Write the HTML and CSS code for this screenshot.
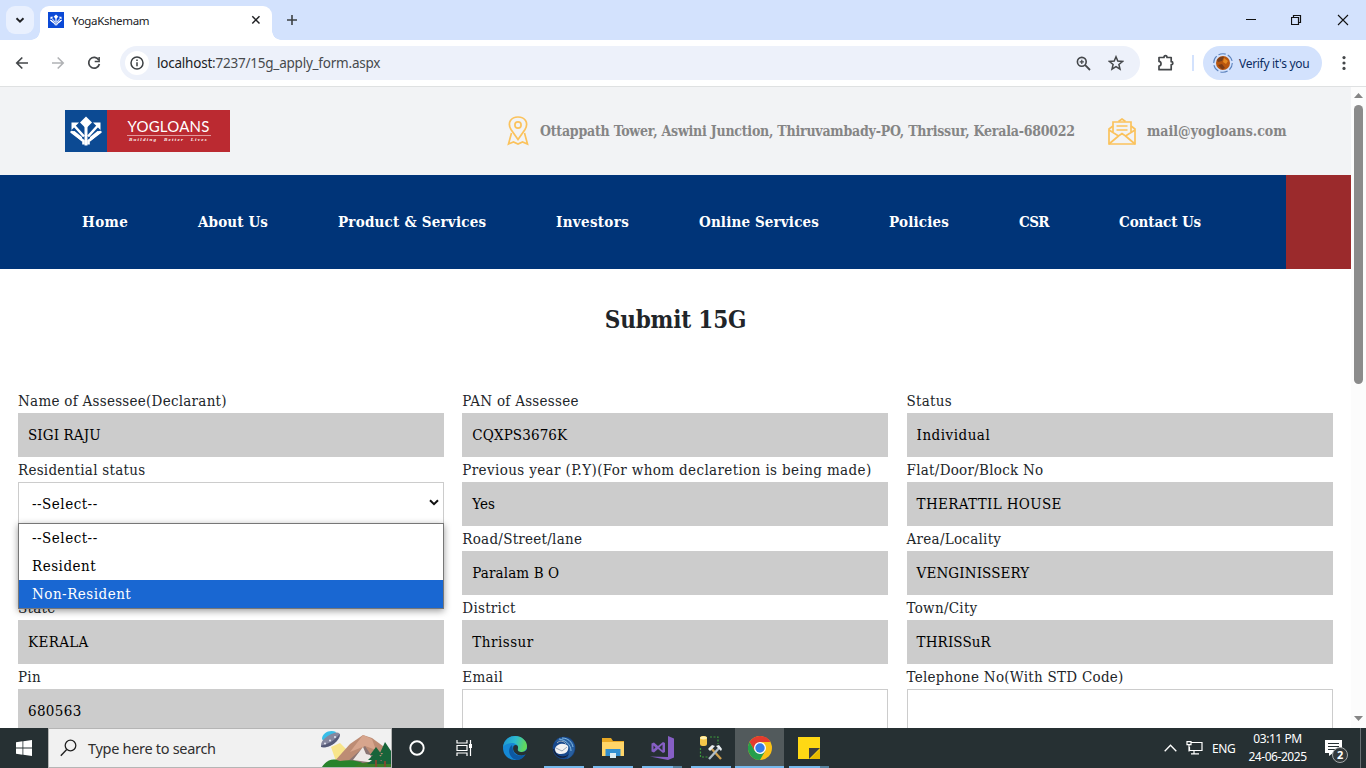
FILE: index.html
```html
<!DOCTYPE html>
<html lang="en">
<head>
<meta charset="utf-8">
<title>YogaKshemam</title>
<link rel="stylesheet" href="styles.css">
</head>
<body>
<div class="tabstrip">
  <div class="tab-menu"><svg width="28" height="28" viewBox="0 0 28 28"><path d="M10.5 12.3l3.5 3.4 3.5-3.4" fill="none" stroke="#202124" stroke-width="1.9"/></svg></div>
  <div class="tab">
    <svg class="favicon" width="16" height="16" viewBox="0 0 42 42"><rect width="42" height="42" fill="#0b49d6"/><use href="#tree"/></svg>
    <span class="tab-title">YogaKshemam</span>
    <svg width="10" height="10" viewBox="0 0 10 10"><path d="M1.3 1.3l7.2 7.2M8.5 1.3L1.3 8.5" stroke="#202124" stroke-width="1.5"/></svg>
  </div>
  <svg class="new-tab" width="12" height="12" viewBox="0 0 12 12"><path d="M6 1v10M1 6h10" stroke="#3c4043" stroke-width="1.6"/></svg>
  <div class="win-controls">
    <svg width="10" height="12" viewBox="0 0 10 12"><path d="M0 5.5h10" stroke="#111" /></svg>
    <svg width="11" height="12" viewBox="0 0 11 12"><path d="M.5 3.5h7v7h-7zM2.5 3.5v-2h7v7h-2" fill="none" stroke="#111" stroke-width="1.2"/></svg>
    <svg width="12" height="12" viewBox="0 0 12 12"><path d="M1 1l10 10M11 1L1 11" stroke="#111" stroke-width="1.1"/></svg>
  </div>
</div>
<div class="toolbar">
  <svg class="tb-back" width="14" height="14" viewBox="0 0 14 14"><path d="M13 7H2M7.3 1.5L1.8 7l5.5 5.5" fill="none" stroke="#44474a" stroke-width="1.7"/></svg>
  <svg class="tb-fwd" width="14" height="14" viewBox="0 0 14 14"><path d="M1 7h11M6.7 1.5L12.2 7l-5.5 5.5" fill="none" stroke="#b0b2b5" stroke-width="1.6"/></svg>
  <svg class="tb-reload" width="14" height="14" viewBox="0 0 14 14"><path d="M11.8 4A5.4 5.4 0 1 0 12.4 8" fill="none" stroke="#44474a" stroke-width="1.7"/><path d="M12.9 1v5.2H7.7V4.8h3.7V1z" fill="#44474a"/></svg>
  <div class="omnibox">
    <div class="site-info"><svg width="14" height="14" viewBox="0 0 14 14"><circle cx="7" cy="7" r="6" fill="none" stroke="#3c4043" stroke-width="1.5"/><path d="M7 6.2v4M7 3.5v1.5" stroke="#3c4043" stroke-width="1.5"/></svg></div>
    <span class="url"><b>localhost</b>:7237/15g_apply_form.aspx</span>
    <svg class="zoom" width="15" height="15" viewBox="0 0 15 15"><circle cx="5.8" cy="5.8" r="4.4" fill="none" stroke="#44474a" stroke-width="1.6"/><path d="M9.2 9.2l4.8 4.8" stroke="#44474a" stroke-width="1.8"/><path d="M5.8 3.7v4.2M3.7 5.8h4.2" stroke="#44474a" stroke-width="1.2"/></svg>
    <svg width="16" height="16" viewBox="0 0 16 16"><path d="M8 1.8l1.8 4.3 4.7.4-3.6 3 1.1 4.6L8 11.6l-4 2.5 1.1-4.6-3.6-3 4.7-.4z" fill="none" stroke="#44474a" stroke-width="1.5"/></svg>
  </div>
  <svg class="puzzle" width="18" height="18" viewBox="0 0 18 18"><path d="M2 3.500h5c0-2.400 3-2.400 3 0h4.200v4.200c2.200 0 2.200 3 0 3v5H2v-3.700c2.700-.4 2.700-4.200 0-4.600z" fill="none" stroke="#44474a" stroke-width="1.700" stroke-linejoin="round"/></svg>
  <i class="tb-sep"></i>
  <div class="verify">
    <svg width="20" height="20" viewBox="0 0 20 20"><circle cx="10" cy="10" r="9.3" fill="none" stroke="#5c83bd" stroke-width="1.1" stroke-dasharray="7.5 2.2"/><circle cx="10" cy="10" r="7" fill="#b8560f"/><path d="M4 7c2-3 5-4 7-3l-2 4-4 1z" fill="#77401f"/><path d="M11 5l4 3-2 3-3-2z" fill="#e68a22"/><path d="M5 12l4-1 3 4-3 1.500z" fill="#7d3b14"/></svg>
    <span>Verify it's you</span>
  </div>
  <svg class="dots" width="4" height="16" viewBox="0 0 4 16"><g fill="#44474a"><circle cx="2" cy="2.6" r="1.6"/><circle cx="2" cy="8" r="1.6"/><circle cx="2" cy="13.4" r="1.6"/></g></svg>
</div>
<div class="viewport">
  <div class="page">
    <header class="site-header">
      <div class="logo">
        <svg class="logo-mark" width="42" height="42" viewBox="0 0 42 42">
          <defs><g id="tree"><path d="M21 6.500l6 6-6 6-6-6z" fill="#fff"/><path d="M21 16v19.500" stroke="#fff" stroke-width="3"/><path d="M19 26.500L9.500 16M23 26.500L32.500 16M18.500 34.500v-3.500L6 21.500M23.500 34.500v-3.500L36 21.500" fill="none" stroke="#fff" stroke-width="2.600"/><path d="M6.500 12.500h7.500L6.500 20zM35.500 12.500H28l7.500 7.500z" fill="#fff"/><path d="M5 21.500l4.500-.5 7.500 6v4.500zM37 21.500l-4.500-.5-7.500 6v4.500z" fill="#fff"/></g></defs>
          <use href="#tree"/>
        </svg>
        <div class="logo-text"><span class="logo-name">YOGLOANS</span><span class="logo-tag">Building Better Lives</span></div>
      </div>
      <svg class="pin" width="22" height="30" viewBox="0 0 22 30"><g fill="none" stroke="#fbc25c" stroke-width="1.7"><path d="M11 23.500L4 13.500C-.2 6 4.500 1 11 1s11.200 5 7 12.500z"/><circle cx="11" cy="9" r="3.100"/><path d="M4.500 17L1.500 28l5-2 4.500 2 4.500-2 5 2-3-11"/></g></svg>
      <span class="addr">Ottappath Tower, Aswini Junction, Thiruvambady-PO, Thrissur, Kerala-680022</span>
      <svg class="mail-icon" width="28" height="27" viewBox="0 0 28 27"><g fill="none" stroke="#fbc25c" stroke-width="1.700"><path d="M5 8L1 11v15h26V11l-4-3M10.500 3.500L14 1l3.500 2.500"/><path d="M5 15V4h18v11M1 12l9.500 6L14 15.500l3.500 2.500 9.500-6M1 26l9.500-8M27 26l-9.500-8M8.500 8h11M8.500 12h11"/></g></svg>
      <span class="mail">mail@yogloans.com</span>
    </header>
    <nav class="nav">
      <ul class="menu"><li class="n1">Home</li><li class="n2">About Us</li><li class="n3">Product &amp; Services</li><li class="n4">Investors</li><li class="n5">Online Services</li><li class="n6">Policies</li><li class="n7">CSR</li><li class="n8">Contact Us</li></ul>
      <div class="nav-end"></div>
    </nav>
    <h1 class="title">Submit 15G</h1>
    <form class="form">
      <div class="field"><label>Name of Assessee(Declarant)</label><div class="box">SIGI RAJU</div></div>
      <div class="field"><label>PAN of Assessee</label><div class="box">CQXPS3676K</div></div>
      <div class="field"><label>Status</label><div class="box mixed">Individual</div></div>
      <div class="field"><label>Residential status</label>
        <div class="box mixed select">--Select--<svg width="10" height="7" viewBox="0 0 10 7"><path d="M1 1.200l4 4 4-4" fill="none" stroke="#111" stroke-width="2"/></svg></div>
        <div class="options mixed"><div>--Select--</div><div>Resident</div><div class="active">Non-Resident</div></div>
      </div>
      <div class="field"><label class="long">Previous year (P.Y)(For whom declaretion is being made)</label><div class="box">Yes</div></div>
      <div class="field"><label>Flat/Door/Block No</label><div class="box wide">THERATTIL HOUSE</div></div>
      <div class="field"></div>
      <div class="field"><label>Road/Street/lane</label><div class="box">Paralam B O</div></div>
      <div class="field"><label>Area/Locality</label><div class="box">VENGINISSERY</div></div>
      <div class="field"><label>State</label><div class="box wide">KERALA</div></div>
      <div class="field"><label>District</label><div class="box mixed">Thrissur</div></div>
      <div class="field"><label>Town/City</label><div class="box">THRISSuR</div></div>
      <div class="field"><label>Pin</label><div class="box wide">680563</div></div>
      <div class="field"><label>Email</label><div class="box open"></div></div>
      <div class="field"><label>Telephone No(With STD Code)</label><div class="box open"></div></div>
    </form>
  </div>
  <div class="scrollbar">
    <svg width="9" height="5" viewBox="0 0 9 5"><path d="M0 5l4.500-5L9 5z" fill="#858585"/></svg>
    <div class="thumb"></div>
    <svg class="down" width="9" height="5" viewBox="0 0 9 5"><path d="M0 0l4.500 5L9 0z" fill="#858585"/></svg>
  </div>
</div>
<div class="taskbar">
  <div class="start"><svg width="16" height="16" viewBox="0 0 16 16"><path d="M0 2.200L6.500 1.300v6.200H0zM7.300 1.200L16 0v7.500H7.300zM0 8.400h6.500v6.300L0 13.800zM7.300 8.400H16V16l-8.700-1.200z" fill="#fff"/></svg></div>
  <div class="search">
    <svg class="lens" width="17" height="18" viewBox="0 0 17 18"><circle cx="10.500" cy="6.500" r="5.300" fill="none" stroke="#222" stroke-width="1.300"/><path d="M6.700 10.500L.8 16.700" stroke="#222" stroke-width="1.400"/></svg>
    <span>Type here to search</span>
    <svg class="scene" width="71" height="37" viewBox="0 0 71 37">
      <path d="M11 17l9-4 16 16-18 8z" fill="#f8e58b"/>
      <path d="M13 33l17-19 13-9 9 3 19 14v15H13z" fill="#bd8c74"/><path d="M43 5l9 4 4 11-11-4-15 6z" fill="#d7a58d"/><path d="M27 32l18-16 6 9 6-5 8 15z" fill="#8b7472"/><path d="M33 30l10-13 3 7 4 1 5 8z" fill="#eee8e6"/>
      <path d="M2 37c5-8 12-9 18-6 12-2 22 0 28 6z" fill="#28832c"/><path d="M34 37c8-6 23-6 37-3v3z" fill="#3c7d26"/>
      <g fill="#17643a"><path d="M56 17l6 8h-3l5 5h-4l4 4H47l5-4h-4l5-5h-3zM65 12l6 9v13H59l4-5h-4l4-6h-3z"/></g><path d="M56 30v7M65 31v6" stroke="#7d4930" stroke-width="2"/>
      <path d="M2 9C2 3 10-1 16 2l-3 7-9 3z" fill="#39bde7"/><ellipse cx="10.500" cy="10" rx="11" ry="5" fill="#85879f" transform="rotate(-35 10.500 10)"/><path d="M1 15.500c7-1 14-5 19-12-1 9-11 15-19 13.500z" fill="#555a78"/><g fill="#e7e8f4"><circle cx="5" cy="13.500" r="1"/><circle cx="10" cy="10.500" r="1"/><circle cx="15" cy="7" r="1"/></g>
    </svg>
  </div>
  <div class="app"><svg width="16" height="16" viewBox="0 0 16 16"><circle cx="8" cy="8" r="6.700" fill="none" stroke="#fff" stroke-width="1.900"/></svg></div>
  <div class="app view"><svg width="17" height="16" viewBox="0 0 17 16"><path d="M1 0v3h10V0M1 16v-3h10v3M1 5.500h10v5H1zM14.500 0v16" fill="none" stroke="#fff" stroke-width="1.200"/><path d="M13 4h3v4h-3z" fill="#fff"/></svg></div>
  <div class="app edge"><svg width="24" height="24" viewBox="0 0 24 24"><defs><linearGradient id="eg" x2="1" y2=".2"><stop stop-color="#1d91d2"/><stop offset=".55" stop-color="#2dbbd0"/><stop offset="1" stop-color="#62d85b"/></linearGradient></defs><circle cx="12" cy="12" r="12" fill="#1588d5"/><path d="M0 11C1 4 6 0 12 0c7 0 12 5 12 10 0 4-3 6-6 6-4 0-4-1-3-3 1-4-3-6-6-6-4 0-8 2-9 4z" fill="url(#eg)"/><path d="M9 9c-6 5-2 14 5 15 4 0 7-3 9-6-5 3-12 2-13-4z" fill="#0c58a2"/><path d="M10.500 10c2-2 5-1 4.500 2-1 3 1 4 4 4 2 0 4-1 5-3 0 2 0 4-1 5-6 4-15-1-12.500-8z" fill="#263033"/></svg></div>
  <div class="app run"><svg width="24" height="24" viewBox="0 0 24 24"><circle cx="12" cy="12" r="11.300" fill="#17488c"/><path d="M3 6C8-1 19 1 22 8c2 7-2 13-7 15 4-8 2-14-5-18z" fill="#285f9f"/><path d="M10 2c6 0 10 4 11 9M7 3c7 1 12 6 12 12" fill="none" stroke="#83b9e3" stroke-width="1"/><path d="M3 13c1-5 9-7 13-3 1 5-2 8-7 8-4 0-6-2-6-5z" fill="#f3f3f4"/><path d="M4 12l6 3 5-4M5 7c3-3 7-2 9 1" fill="none" stroke="#9aa8b8"/><path d="M2 13c2 7 9 10 15 5-5 7-14 4-16-5z" fill="#141c34"/></svg></div>
  <div class="app run"><svg width="22" height="20" viewBox="0 0 22 20"><path d="M0 0h9l2 3h11v15H0z" fill="#e9a925"/><path d="M0 4h22v14H0z" fill="#ffd568"/><path d="M3.500 18v-7h15v7h-4.500v-3H8v3z" fill="#328fd0"/><path d="M8 15h6v5H8z" fill="#dcecf2"/></svg></div>
  <div class="app run multi"><svg width="24" height="24" viewBox="0 0 24 24"><path d="M18 0l6 2.500v19L18 24 0 20.500l18 .5z" fill="#865fc5"/><path d="M1.500 7.500L4 6.500l4 3.500 5-4 2 1v9l-2 1-5-4-4 3.500-2.500-1zM3.500 9.500v4l2-2zM12.500 8.500L9.300 11.500l3.200 3z" fill="#865fc5" fill-rule="evenodd"/></svg></div>
  <div class="app run"><svg width="24" height="24" viewBox="0 0 24 24"><rect x="1" y="0" width="7" height="10" rx="2.500" fill="#f5c649"/><ellipse cx="4.500" cy="1.800" rx="3.500" ry="1.600" fill="#fff0ad"/><path d="M11 1h8v7M1.500 12v9h8" fill="none" stroke="#3c993d" stroke-width="1.200" stroke-dasharray="2 1.500"/><path d="M11 11l11 12" stroke="#cfa04e" stroke-width="2.300"/><path d="M21 11L10 23" stroke="#aebdca" stroke-width="2.300"/><path d="M9 13l4-4 3 1-5 5zM17 10l3-1 3 4-1 2z" fill="#e8edf0"/></svg></div>
  <div class="app run current"><svg width="24" height="24" viewBox="0 0 24 24"><circle cx="12" cy="12" r="12" fill="#fbc116"/><path d="M1.600 6A12 12 0 0 1 22.400 6H12L6.800 15z" fill="#e33b2e"/><path d="M1.600 6A12 12 0 0 0 12 24l5.200-9-10.400 0z" fill="#269f4c"/><circle cx="12" cy="12" r="6" fill="#fff"/><circle cx="12" cy="12" r="4.700" fill="#367be8"/></svg></div>
  <div class="app run multi"><svg width="22" height="22" viewBox="0 0 22 22"><path d="M0 0h22v22H0z" fill="#ffd814"/><path d="M22 11L11 22V11z" fill="#3c3d3f"/><path d="M22 12v10H12z" fill="#e7b900"/></svg></div>
  <div class="tray">
    <svg class="chev" width="13" height="8" viewBox="0 0 13 8"><path d="M.7 7.300l5.800-6 5.800 6" fill="none" stroke="#fff" stroke-width="1.300"/></svg>
    <svg class="net" width="17" height="14" viewBox="0 0 17 14"><path d="M5 1.500h11v8H3.500V6M8 9.500v3M5 12.900h8M1 .600h4v3H1zM3 3.600v7" fill="none" stroke="#fff" stroke-width="1.200"/></svg>
    <span class="lang">ENG</span>
    <div class="clock"><span class="time">03:11 PM</span><span>24-06-2025</span></div>
    <div class="notes"><svg width="17" height="16" viewBox="0 0 17 16"><path d="M0 0h17v13H8l-4 3v-3H0z" fill="#fff"/><path d="M3 3.500h11M3 6.500h11M3 9.500h7" stroke="#263033" stroke-width="1.200"/></svg><span class="badge">2</span></div>
  </div>
</div>
</body>
</html>
```
FILE: styles.css
```css
* { box-sizing: border-box; }
body { margin: 0; width: 1366px; height: 768px; overflow: hidden; background: #fff; font-family: "DejaVu Serif Condensed", "DejaVu Serif", serif; font-stretch: condensed; color: #212529; display: flex; flex-direction: column; }
svg { display: block; flex: none; }
.tabstrip { height: 40px; flex: none; background: #d3e2fd; display: flex; align-items: center; padding-left: 6px; font-family: "Noto Sans", sans-serif; }
.tab-menu { width: 28px; height: 28px; border-radius: 9px; background: #e9f0fe; }
.tab { position: relative; width: 232px; height: 34px; margin: 6px 0 0 6px; padding: 0 11px 6px 8px; background: #fff; border-radius: 9px 9px 0 0; display: flex; align-items: center; }
.tab::before, .tab::after { content: ""; position: absolute; bottom: 0; width: 9px; height: 9px; }
.tab::before { left: -9px; background: radial-gradient(circle at 0 0, #d3e2fd 8.500px, #fff 9px); }
.tab::after { right: -9px; background: radial-gradient(circle at 100% 0, #d3e2fd 8.500px, #fff 9px); }
.tab-title { flex: 1; margin-left: 8px; font-size: 11.500px; letter-spacing: -0.300px; color: #202124; }
.new-tab { margin-left: 14px; }
.win-controls { margin-left: auto; display: flex; gap: 35px; padding-right: 17px; align-items: center; }
.toolbar { height: 47px; flex: none; display: flex; align-items: center; background: #fff; border-bottom: 1px solid #dfe1e2; font-family: "Noto Sans", sans-serif; padding-left: 15px; }
.tb-fwd { margin-left: 22px; }
.tb-reload { margin-left: 22px; }
.omnibox { margin-left: 19px; width: 1020px; height: 34px; border-radius: 17px; background: #edf1fa; display: flex; align-items: center; padding: 0 16px 0 5px; }
.site-info { width: 24px; height: 24px; border-radius: 50%; background: #fff; display: grid; place-items: center; }
.url { flex: 1; margin-left: 8px; font-size: 13.500px; letter-spacing: -0.220px; color: #474a4d; }
.url b { font-weight: 400; color: #202124; }
.zoom { margin-right: 17px; }
.puzzle { margin-left: 17px; }
.tb-sep { width: 2px; height: 16px; background: #d3e2fd; margin-left: 17px; }
.verify { width: 119px; height: 34px; border-radius: 17px; background: #d3e2fd; margin-left: 9px; display: flex; align-items: center; padding-left: 10px; gap: 6px; font-size: 12px; letter-spacing: -0.300px; color: #0a2c62; white-space: nowrap; }
.dots { margin-left: 20px; }
.viewport { height: 641px; flex: none; display: flex; overflow: hidden; }
.page { width: 1351px; height: 641px; overflow: hidden; }
.scrollbar { width: 15px; background: #fcfcfc; display: flex; flex-direction: column; align-items: center; padding-top: 6px; }
.thumb { width: 9px; height: 279px; border-radius: 5px; background: #8b8b8b; margin-top: 7px; }
.down { margin: auto 0 7px; }
.site-header { height: 88px; background: #f2f3f5; display: flex; align-items: center; padding-left: 65px; font-weight: 700; color: #858585; font-size: 14px; white-space: nowrap; }
.logo { width: 165px; height: 42px; display: flex; background: #bb2a31; }
.logo-mark { background: #0c4a93; }
.logo-text { width: 123px; display: flex; flex-direction: column; align-items: center; color: #fff; padding-top: 8px; }
.logo-name { font: 400 15px/17px Lato, sans-serif; border-bottom: 1px solid #e2989b; width: 84px; text-align: center; letter-spacing: 0.200px; }
.logo-tag { font: italic 700 5px/8px "Liberation Serif", serif; letter-spacing: 1.300px; word-spacing: 4px; }
.pin { margin-left: 277px; }
.addr { width: 535px; margin-left: 11px; letter-spacing: -0.225px; }
.mail-icon { margin-left: 33px; }
.mail { margin-left: 11px; }
.nav { height: 94px; display: flex; background: #003478; }
.menu { flex: 1; margin: 0; padding: 0 0 0 82px; list-style: none; display: flex; align-items: center; gap: 70px; color: #fff; font-weight: 700; font-size: 15px; white-space: nowrap; }
.n1 { width: 46px; letter-spacing: 0.400px; } .n2 { width: 70px; letter-spacing: 0.130px; } .n3 { width: 148px; letter-spacing: 0.220px; } .n4 { width: 73px; letter-spacing: 0.330px; }
.n5 { width: 120px; letter-spacing: 0.150px; } .n6 { width: 60px; letter-spacing: 0.200px; } .n7 { width: 30px; letter-spacing: -0.600px; } .n8 { width: 82px; letter-spacing: -0.100px; }
.nav-end { width: 65px; background: #9b2a2c; }
.title { margin: 0; height: 119px; padding-top: 34px; text-align: center; font-size: 24px; line-height: 34px; letter-spacing: -0.200px; }
.form { display: grid; grid-template-columns: repeat(3, 426px); column-gap: 18.300px; grid-auto-rows: 69px; padding-left: 18px; font-size: 15px; }
.field { position: relative; white-space: nowrap; }
.field label { display: block; height: 25px; line-height: 26px; letter-spacing: 0.270px; }
.field .long { letter-spacing: 0.380px; }
.box { height: 44px; background: #ccc; padding-left: 10px; line-height: 44px; color: #000; letter-spacing: 0.120px; }
.wide { letter-spacing: 0.350px; }
.mixed { letter-spacing: 0.500px; }
.select, .open { background: #fff; border: 1px solid #ccc; }
.select { display: flex; align-items: center; justify-content: space-between; padding: 0 4px 0 13px; }
.select svg { margin-bottom: 3px; }
.options { position: absolute; z-index: 2; left: 0; top: 66px; width: 426px; height: 86px; border: 1px solid #777; background: #fff; box-shadow: 0 2px 7px rgba(0,0,0,.4); color: #000; line-height: 29px; }
.options div { height: 28px; padding-left: 13px; }
.options .active { background: #1967d2; color: #fff; }
.taskbar { height: 40px; flex: none; background: #263033; display: flex; font-family: "Noto Sans", sans-serif; color: #fff; }
.start { width: 48px; display: grid; place-items: center; }
.search { width: 344px; background: #f1f1f1; border: 1px solid #b5b5b5; display: flex; align-items: center; padding-left: 11px; color: #2f2f2f; font-size: 14.500px; letter-spacing: -0.300px; }
.search span { flex: 1; margin-left: 11px; }
.app { width: 49px; height: 40px; display: grid; place-items: center; }
.app.view { width: 47px; }
.edge { margin-left: 2px; }
.run { background: linear-gradient(#76b9ed, #76b9ed) 50% 100% / 40px 2px no-repeat; }
.multi { background: linear-gradient(90deg, #76b9ed 31px, #56829f 31px) 50% 100% / 40px 2px no-repeat; }
.current { background: linear-gradient(#76b9ed, #76b9ed) 0 100% / 100% 2px no-repeat #525a5c; }
.tray { margin-left: auto; display: flex; align-items: center; font-size: 12px; letter-spacing: -0.400px; }
.net { margin-left: 9px; }
.lang { margin-left: 9px; width: 24px; }
.clock { width: 59px; margin-left: 12px; display: flex; flex-direction: column; align-items: center; line-height: 18px; white-space: nowrap; font-size: 12px; letter-spacing: -0.450px; }
.notes { position: relative; margin-left: 18px; width: 36px; border-right: 1px solid #687073; height: 40px; padding-top: 12px; margin-right: 5px; }
.badge { position: absolute; left: 7px; top: 19px; width: 16px; height: 16px; border: 1px solid #a5a9aa; border-radius: 50%; background: #33393b; font: 700 11px/14px "Noto Sans", sans-serif; text-align: center; }
```
